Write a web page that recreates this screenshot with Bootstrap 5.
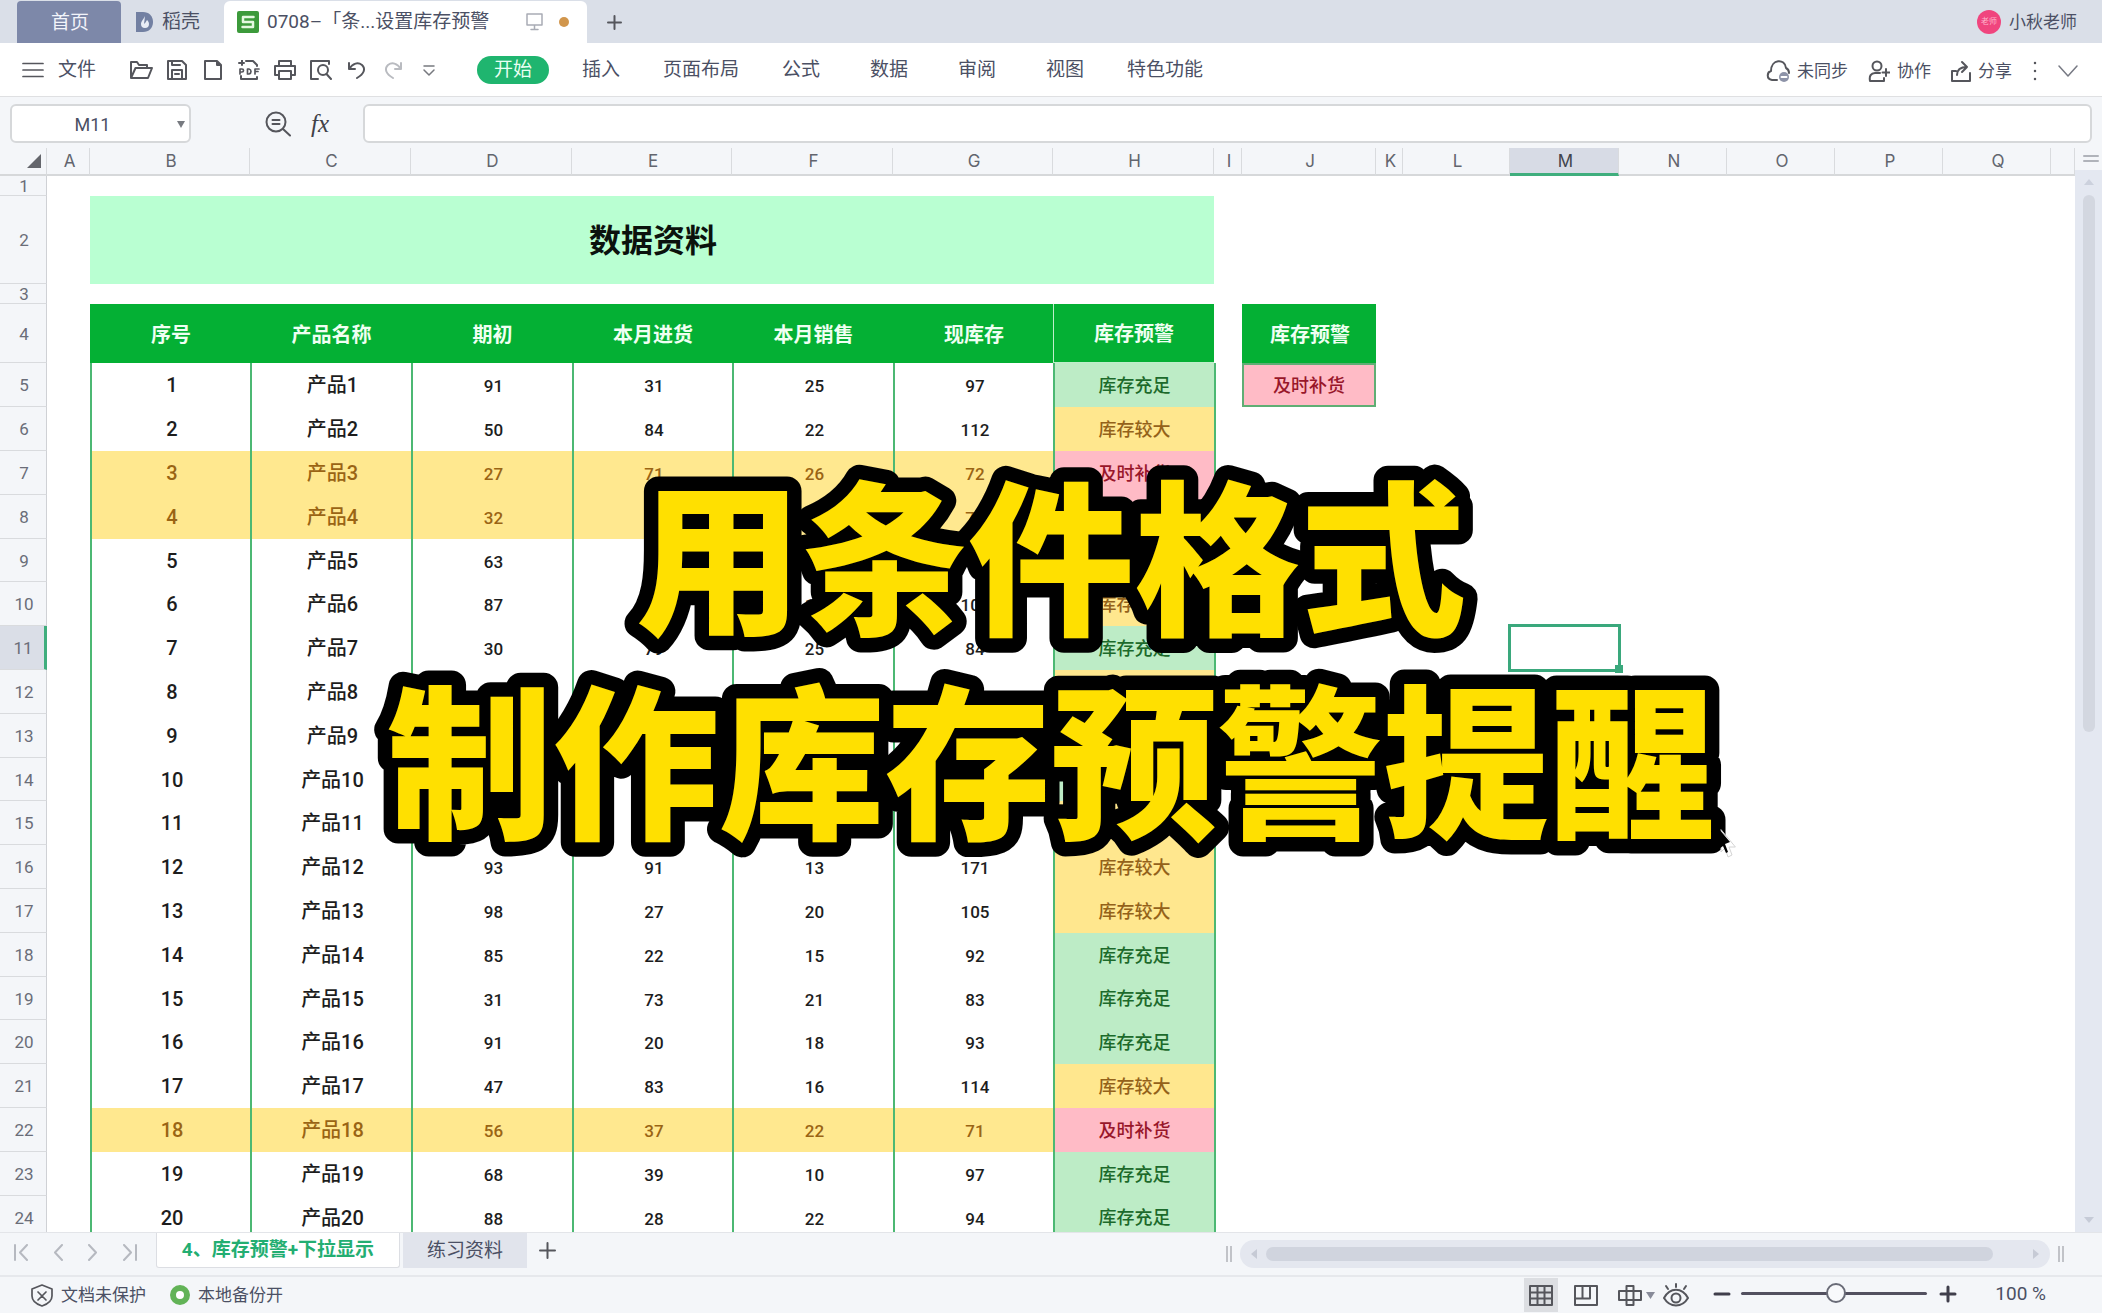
<!DOCTYPE html>
<html lang="zh-CN">
<head>
<meta charset="utf-8">
<meta name="viewport" content="width=device-width, initial-scale=1">
<title>设置库存预警</title>
<link href="https://cdn.jsdelivr.net/npm/bootstrap@5.3.0/dist/css/bootstrap.min.css" rel="stylesheet">
<style>
  body { font-family: Roboto, "Noto Sans CJK SC", sans-serif; font-size: 19px; line-height: 28px; color: #4b5064; background: #f4f6f9; }
  button { font: inherit; color: inherit; background: none; border: 0; padding: 0; display: flex; align-items: center; justify-content: center; }
  a { color: inherit; text-decoration: none; }
  svg { display: block; flex: none; fill: none; stroke: #55565c; stroke-width: 2; stroke-linejoin: round; stroke-linecap: round; }

  .tab-strip { height: 43px; background: #dadfe8; padding: 1px 25px 0 17px; }
  .tab-home { width: 104px; background: #7d88a9; color: #f2f4fa; border-radius: 4px 4px 0 0; padding: 2px 0 0 2px; }
  .tab-docer { width: 103px; padding-left: 15px; gap: 9px; }
  .tab-file { width: 363px; background: #fff; border-radius: 6px 6px 0 0; padding: 0 18px 0 13px; }
  .tab-file a { margin-left: 8px; }
  .dot-unsaved { width: 10px; height: 10px; border-radius: 50%; background: #d1964c; margin-left: 16px; }
  .small-ui { font-size: 17px; }
  .avatar { width: 24px; height: 24px; border-radius: 50%; background: #f0457e; color: #ffb3cb; font-size: 8px; line-height: 24px; text-align: center; }

  .menu-strip { height: 54px; background: #fff; border-bottom: 1px solid #dfe0e2; padding: 0 24px 0 22px; }
  .file-menu { gap: 14px; }
  .quick-tools { gap: 12px; margin-left: 33px; }
  .menu-list { gap: 24px; margin-left: 36px; }
  .menu-list a { min-width: 64px; padding: 0 6px; text-align: center; }
  .menu-list a.current { min-width: 72px; height: 28px; line-height: 28px; border-radius: 14px; margin-right: -4px; background: #1fb56f; color: #eafff3; }
  .share-tools { gap: 20px; font-size: 17px; padding-top: 2px; }
  .share-tools button { gap: 7px; }

  .formula-strip { height: 51px; padding: 7px 10px 5px; }
  .cell-box { background: #fff; border: 2px solid #d6d8da; border-radius: 6px; height: 39px; }
  .name-box { width: 181px; }
  .name-box input, .cell-box input { border: 0; outline: 0; background: none; width: 100%; color: #4b5064; }
  .name-box input { text-align: center; font-size: 18px; padding: 2px 4px 0 0; }
  .look-up { margin-left: 74px; }
  .fx { font: italic 25px/28px "Liberation Serif", serif; color: #404148; margin: 0 34px 0 20px; }

  .sheet { min-height: 0; background: #fff; }
  .sheet-view { min-width: 0; overflow: hidden; }
  .cells { table-layout: fixed; width: 100%; border-collapse: separate; border-spacing: 0; color: #1d1d1d; }
  .cells th, .cells td { padding: 0; text-align: center; vertical-align: middle; white-space: nowrap; overflow: hidden; }
  .cells thead th { height: 28px; font: 400 17px/24px Inter, sans-serif; color: #62656e; background: #f4f6f9; border-right: 1px solid #d9dbde; border-bottom: 2px solid #d6d8da; padding-left: 3px; }
  .cells thead th.picked { background: #d7dbe5; border-bottom: 3px solid #3fae7d; color: #41444c; }
  .cells tbody th { font-size: 17px; line-height: 18px; font-weight: 400; color: #6a6d78; background: #f4f6f9; border-right: 1px solid #cfd1d5; border-bottom: 1px solid #d9dbde; padding: 1px 0 0 2px; }
  .cells tbody th.picked { background: #dadee7; border-right: 3px solid #3fae7d; }
  .cells td.banner { background: #b9ffd2; font-size: 32px; line-height: 40px; font-weight: 700; color: #0b120d; padding: 2px 0 0 2px; }
  .cells td.head { background: #04b034; color: #effff2; font-size: 20px; font-weight: 700; padding: 2px 0 0 2px; }
  .cells td.head.alert-head { border-left: 1px solid #bfeecb; border-bottom: 1px solid #bfeecb; padding-left: 0; }
  .cells td.num { border-left: 2px solid #4cb873; font-size: 17px; font-weight: 500; line-height: 24px; padding: 2px 0 0 2px; }
  .cells td.lead-cell { font-size: 20px; padding-top: 0; }
  .cells td.edge { border-left: 2px solid #4cb873; }
  .cells .low td.num { background: #ffe88f; color: #9a6414; }
  .cells td.state { border-left: 2px solid #4cb873; font-size: 18px; font-weight: 500; line-height: 24px; padding-top: 1px; }
  .cells td.ok { background: #bdecc6; color: #1c6a2b; }
  .cells td.much { background: #ffe78e; color: #94621a; }
  .cells td.few { background: #ffbbc6; color: #98162a; }
  .cells td.boxed { border: 2px solid #5fae74; }
  .cells td.cursor-cell { position: relative; overflow: visible; outline: 3px solid #3aa87c; outline-offset: -1px; }
  .cursor-cell::after { content: ""; position: absolute; right: -4px; bottom: -3px; width: 8px; height: 8px; background: #3aa87c; }

  .v-scroll { width: 27px; background: #e4e8f1; }
  .v-scroll .corner { height: 22px; background: #f4f6f9; padding: 7px 8px; }
  .v-thumb { width: 12px; height: 537px; border-radius: 6px; background: #d3d7e0; margin-top: 1px; }
  .sheet-strip { height: 43px; border-top: 1px solid #e3e5e9; padding: 0 38px 0 14px; }
  .sheet-moves { gap: 23px; width: 142px; height: 38px; }
  .sheet-tab { height: 35px; padding: 0 24px; }
  .sheet-tab.current { width: 244px; padding: 0; background: #fff; color: #23ae72; font-weight: 700; border: 1px solid #dcdee3; border-top: 0; border-radius: 0 0 3px 3px; }
  .sheet-tab.other { background: #e1e4ec; margin-left: 3px; }
  .sheet-tab.adder { padding: 0; margin-left: 12px; }
  .h-track { width: 810px; height: 28px; border-radius: 14px; background: #e4e7ef; padding: 0 11px; }
  .h-thumb { height: 14px; border-radius: 7px; background: #d0d4de; margin: 0 40px 0 9px; }
  .grip { width: 6px; height: 16px; border: solid #c1c3c8; border-width: 0 2px; }

  .status-strip { height: 38px; border-top: 2px solid #e6e8ec; font-size: 17px; padding: 0 56px 0 31px; }
  .view-on { width: 34px; height: 34px; background: #dcdee2; }
  .zoom-range { width: 186px; height: 24px; appearance: none; background: none; margin: 0 12px 0 10px; }
  .zoom-range::-webkit-slider-runnable-track { height: 3px; border-radius: 2px; background: #52505f; }
  .zoom-range::-webkit-slider-thumb { appearance: none; width: 20px; height: 20px; margin-top: -9px; border-radius: 50%; border: 2px solid #696b77; background: #f8f9fb; }
  .zoom-set { padding-bottom: 3px; }
  .zoom-value { font-size: 19px; margin-left: 38px; }

  .caption { top: 438px; height: 440px; overflow: visible; pointer-events: none; }
  .caption text { font: 900 166px "Noto Sans CJK SC", sans-serif; fill: #ffe000; stroke: #000; stroke-width: 29px; stroke-linejoin: round; paint-order: stroke; text-anchor: middle; }
  .pointer { left: 1718px; top: 828px; }
</style>
<script src="https://cdn.jsdelivr.net/npm/bootstrap@5.3.0/dist/js/bootstrap.bundle.min.js"></script>
</head>
<body class="vh-100 overflow-hidden d-flex flex-column position-relative">

<header class="tab-strip d-flex align-items-stretch flex-shrink-0">
  <button class="tab-home">首页</button>
  <button class="tab-docer justify-content-start">
    <svg width="17" height="20" viewBox="0 0 17 20"><path d="M0 0h7c6 0 10 4 10 10s-4 10-10 10H0z" fill="#7280a2" stroke="none"/><path d="M9 4c-1 3-4 5-4 8a4 4 0 0 0 8 0c0-2-1-3-2-4-1 2-2 3-3 4" fill="#e8ecf5" stroke="none"/></svg>
    稻壳
  </button>
  <div class="tab-file d-flex align-items-center">
    <svg width="22" height="22" viewBox="0 0 22 22"><rect width="22" height="22" rx="2" fill="#3c9a3b" stroke="none"/><path d="M16.500 6H6v5h10v5H5.500" stroke="#e4f8e0" stroke-width="2.500"/></svg>
    <a href="#">0708–「条...设置库存预警</a>
    <svg class="ms-auto" width="17" height="18" viewBox="0 0 17 18" style="stroke:#a9acb5;stroke-width:1.500"><path d="M1 1h15v11H1zM8.500 12v4M5 16.500h7"/></svg>
    <span class="dot-unsaved"></span>
  </div>
  <button class="ms-3 ps-1" aria-label="新建"><svg width="15" height="15" viewBox="0 0 15 15"><path d="M7.500 1v13M1 7.500h13"/></svg></button>
  <div class="ms-auto d-flex align-items-center small-ui gap-2"><span class="avatar">老师</span><span>小秋老师</span></div>
</header>

<nav class="menu-strip d-flex align-items-center flex-shrink-0">
  <button class="file-menu"><svg width="22" height="16" viewBox="0 0 22 16" style="stroke-width:1.700"><path d="M1 1.500h20M1 8h20M1 14.500h20"/></svg>文件</button>
  <div class="quick-tools d-flex align-items-center">
    <button aria-label="打开"><svg width="24" height="20" viewBox="0 0 24 20"><path d="M2 18V2h6l2 3h8v3M2 18 6.500 8H23l-4 10z"/></svg></button>
    <button aria-label="保存"><svg width="24" height="20" viewBox="0 0 24 20"><path d="M3 1h14l4 4v14H3zM7 19v-9h10v9M7 1v4h8M10 14h4"/></svg></button>
    <button aria-label="新建文件"><svg width="24" height="20" viewBox="0 0 24 20"><path d="M4 1h12l4 4v14H4zM16 1v4h4"/></svg></button>
    <button aria-label="输出PDF"><svg width="24" height="20" viewBox="0 0 24 20"><path d="M9 1h7l4 4v1M4 16v3h16v-2M5 0v5M2 3h5"/><path d="M3 14V9h2q1.500 0 1.500 1.500T5 12H3M10.500 9v5h1.500q2-.5 2-2.500t-2-2.500zM18 14V9h4M18 11.500h3" stroke-width="1.700"/></svg></button>
    <button aria-label="打印"><svg width="24" height="20" viewBox="0 0 24 20"><path d="M6 6V1h12v5M6 15H2V6h20v9h-4M6 11h12v8H6z"/></svg></button>
    <button aria-label="打印预览"><svg width="24" height="20" viewBox="0 0 24 20"><path d="M9 19H2V1h18v3"/><circle cx="14" cy="10" r="5"/><path d="M17.500 14 22 19"/></svg></button>
    <button aria-label="撤销"><svg width="24" height="20" viewBox="0 0 24 20"><path d="M4 3v6h6M4 9c4-6 9-7 13-4 4 4 2 9-5 13"/></svg></button>
    <button aria-label="恢复"><svg width="24" height="20" viewBox="0 0 24 20" style="stroke:#b9bbc0"><path d="M20 3v6h-6M20 9c-4-6-9-7-13-4-4 4-2 9 5 13"/></svg></button>
    <button aria-label="更多"><svg width="24" height="20" viewBox="0 0 24 20" style="stroke:#77797f;stroke-width:1.500"><path d="M7 6h10M7 10l5 5 5-5"/></svg></button>
  </div>
  <div class="menu-list d-flex align-items-center">
    <a class="current" href="#">开始</a><a href="#">插入</a><a href="#">页面布局</a><a href="#">公式</a><a href="#">数据</a><a href="#">审阅</a><a href="#">视图</a><a href="#">特色功能</a>
  </div>
  <div class="share-tools ms-auto d-flex align-items-center">
    <button><svg width="24" height="24" viewBox="0 0 24 24"><path d="M11 21H6c-6-1-5-8-1-9 0-12 14-13 15-3 2 1 3 3 3 5"/><circle cx="18" cy="18" r="5" fill="#8d93a8" stroke="none"/><path d="M15.500 18h5" stroke="#fff"/></svg>未同步</button>
    <button><svg width="22" height="24" viewBox="0 0 22 24"><circle cx="9" cy="7" r="4.500"/><path d="M12 14H7c-4 0-6 3-5 8h14v-3M18 10v7M14.500 13.500h7"/></svg>协作</button>
    <button class="ms-n1"><svg width="20" height="24" viewBox="0 0 20 24"><path d="M5 12H1v10h18v-8M6 16c0-6 4-8 10-8M11 3l5 5-5 5"/></svg>分享</button>
    <button aria-label="更多选项"><svg width="6" height="20" viewBox="0 0 6 20" style="stroke-width:2.500"><path d="M3 2v.1M3 10v.1M3 18v.1"/></svg></button>
    <button aria-label="收起功能区"><svg width="20" height="12" viewBox="0 0 20 12" style="stroke:#777a84;stroke-width:1.500"><path d="M1 1l9 10 9-10"/></svg></button>
  </div>
</nav>

<div class="formula-strip d-flex align-items-center flex-shrink-0">
  <div class="cell-box name-box d-flex align-items-center">
    <input aria-label="名称框" value="M11">
    <svg class="me-1" width="8" height="8" viewBox="0 0 8 8"><path d="M0 1h8L4 8z" fill="#777a80" stroke="none"/></svg>
  </div>
  <button class="look-up" aria-label="查找"><svg width="26" height="26" viewBox="0 0 26 26"><circle cx="11" cy="11" r="9.500"/><path d="M18 18l7 6.500M7.500 9h7M7.500 13h7"/></svg></button>
  <button class="fx" aria-label="插入函数">fx</button>
  <div class="cell-box flex-grow-1"><input class="px-2" aria-label="编辑栏"></div>
</div>

<main class="sheet d-flex flex-grow-1">
  <div class="sheet-view flex-grow-1">
    <table class="cells">
      <colgroup id="cols"></colgroup>
      <thead><tr id="letters"></tr></thead>
      <tbody id="grid"></tbody>
    </table>
  </div>
  <div class="v-scroll d-flex flex-column align-items-center">
    <div class="corner w-100"><svg width="16" height="7" viewBox="0 0 16 7" style="stroke:#b0b3ba"><path d="M1 1h14M1 6h14"/></svg></div>
    <svg class="my-2" width="10" height="8" viewBox="0 0 10 8"><path d="M0 7h10L5 1z" fill="#ccd1dd" stroke="none"/></svg>
    <div class="v-thumb"></div>
    <svg class="mt-auto mb-2" width="10" height="8" viewBox="0 0 10 8"><path d="M0 1h10L5 7z" fill="#c6cbd7" stroke="none"/></svg>
  </div>
</main>

<div class="sheet-strip d-flex align-items-start flex-shrink-0">
  <div class="sheet-moves d-flex">
    <button aria-label="第一张"><svg width="15" height="17" viewBox="0 0 15 17" style="stroke:#b6b9c0"><path d="M1 1v15M13 1 6 8.500l7 7.500"/></svg></button>
    <button aria-label="上一张"><svg width="12" height="17" viewBox="0 0 12 17" style="stroke:#b6b9c0"><path d="M10 1 3 8.500l7 7.500"/></svg></button>
    <button aria-label="下一张"><svg width="12" height="17" viewBox="0 0 12 17" style="stroke:#b6b9c0"><path d="M2 1l7 7.500L2 16"/></svg></button>
    <button aria-label="最后一张"><svg width="15" height="17" viewBox="0 0 15 17" style="stroke:#b6b9c0"><path d="M14 1v15M2 1l7 7.500L2 16"/></svg></button>
  </div>
  <button class="sheet-tab current">4、库存预警+下拉显示</button>
  <button class="sheet-tab other">练习资料</button>
  <button class="sheet-tab adder" aria-label="新建工作表"><svg width="17" height="17" viewBox="0 0 17 17"><path d="M8.500 1v15M1 8.500h15"/></svg></button>
  <div class="ms-auto align-self-center d-flex align-items-center">
    <span class="grip me-2"></span>
    <div class="h-track d-flex align-items-center">
      <svg width="6" height="10" viewBox="0 0 6 10"><path d="M6 0v10L0 5z" fill="#c6cad5" stroke="none"/></svg>
      <div class="h-thumb flex-grow-1"></div>
      <svg width="6" height="10" viewBox="0 0 6 10"><path d="M0 0v10l6-5z" fill="#c6cad5" stroke="none"/></svg>
    </div>
    <span class="grip ms-2"></span>
  </div>
</div>

<footer class="status-strip d-flex align-items-center flex-shrink-0">
  <svg width="22" height="23" viewBox="0 0 22 23" style="stroke-width:1.700"><path d="M11 1l10 4v7c0 5-4 8-10 10C5 20 1 17 1 12V5zM7 8l8 8M15 8l-8 8"/></svg>
  <span class="ms-2">文档未保护</span>
  <svg class="ms-4" width="20" height="20" viewBox="0 0 20 20"><circle cx="10" cy="10" r="7" stroke="#62b357" stroke-width="6" fill="#fff"/></svg>
  <span class="ms-2">本地备份开</span>
  <div class="ms-auto d-flex align-items-center">
    <button class="view-on" aria-label="普通视图"><svg width="24" height="21" viewBox="0 0 24 21"><path d="M1 1h22v19H1zM1 7.500h22M1 13.500h22M8.500 1v19M15.500 1v19"/></svg></button>
    <button class="ms-3" aria-label="页面布局视图"><svg width="24" height="21" viewBox="0 0 24 21"><path d="M1 1h22v19H1zM1 13.500h15V1M8.500 1v12.500"/></svg></button>
    <button class="ms-3 ps-1" aria-label="分页预览"><svg width="24" height="21" viewBox="0 0 24 21"><path d="M8.500 1h7v19h-7zM1 6h22v9H1z"/></svg><svg class="ms-1" width="9" height="7" viewBox="0 0 9 7"><path d="M0 0h9L4.500 7z" fill="#888b99" stroke="none"/></svg></button>
    <button class="ms-2" aria-label="护眼模式"><svg width="26" height="24" viewBox="0 0 26 24"><path d="M1 15c6-11 18-11 24 0-6 10-18 10-24 0z"/><circle cx="13" cy="15" r="4.500"/><path d="M13 1v3M3 3l2 3M23 3l-2 3"/></svg></button>
    <div class="zoom-set d-flex align-items-center ms-4">
      <button aria-label="缩小"><svg width="18" height="18" viewBox="0 0 18 18" style="stroke:#3f3e4b;stroke-width:3"><path d="M2 9h14"/></svg></button>
      <input class="zoom-range" type="range" aria-label="显示比例" min="0" max="100" value="51">
      <button aria-label="放大"><svg width="18" height="18" viewBox="0 0 18 18" style="stroke:#3f3e4b;stroke-width:3"><path d="M2 9h14M9 2v14"/></svg></button>
      <span class="zoom-value">100 %</span>
    </div>
  </div>
</footer>

<svg class="caption position-absolute start-0 w-100"><text x="50%" y="184">用条件格式</text><text x="50%" y="388">制作库存预警提醒</text></svg>
<svg class="pointer position-absolute" width="18" height="34" viewBox="0 0 18 34"><path d="M3 2v22l4-4 3 9 4-2-3-8h6z" fill="#fff" stroke="#d4d4d4" stroke-width="1"/><path d="M1 1v20l4-3 3 7 2-1-3-8 5-2z" fill="#000" stroke="none"/></svg>

<script>
  const widths = [47, 43, 160, 161, 161, 160, 161, 160, 161, 28, 134, 27, 107, 109, 108, 108, 108, 108];
  cols.innerHTML = widths.map(w => `<col style="width:${w}px">`).join('') + '<col>';
  letters.innerHTML = '<th><svg class="ms-auto me-1" width="16" height="16" viewBox="0 0 16 16"><path d="M15 1v14H1z" fill="#64666c" stroke="none"/></svg></th>' +
    [...'ABCDEFGHIJKLMNOPQ'].map(c => `<th${c === 'M' ? ' class="picked"' : ''}>${c}</th>`).join('') + '<th></th>';

  const states = { few: '及时补货', much: '库存较大', ok: '库存充足' };
  // one row per product: opening, purchased, sold, in stock, state, label shown
  const stock = [
    [91, 31, 25, 97, 'ok'], [50, 84, 22, 112, 'much'], [27, 71, 26, 72, 'few'], [32, '', '', 72, 'few', ''], [63, '', '', '', 'much', ''],
    [87, 36, 18, 105, 'much'], [30, 79, 25, 84, 'ok'], ['', '', '', '', 'much', ''], ['', '', '', '', 'ok', ''], ['', '', '', '', 'ok', ''],
    ['', '', '', '', 'much', ''], [93, 91, 13, 171, 'much'], [98, 27, 20, 105, 'much'], [85, 22, 15, 92, 'ok'], [31, 73, 21, 83, 'ok'],
    [91, 20, 18, 93, 'ok'], [47, 83, 16, 114, 'much'], [56, 37, 22, 71, 'few'], [68, 39, 10, 97, 'ok'], [88, 28, 22, 94, 'ok']
  ];
  const blank = n => '<td></td>'.repeat(n);
  const row = (n, h, cells, cls = '') => `<tr class="${cls}" style="height:${h}px"><th${n === 11 ? ' class="picked"' : ''}>${n}</th>${cells}</tr>`;
  const heads = ['序号', '产品名称', '期初', '本月进货', '本月销售', '现库存'];

  let html = row(1, 19, blank(18));
  html += row(2, 88, '<td></td><td class="banner" colspan="7">数据资料</td>' + blank(10));
  html += row(3, 20, blank(18));
  html += row(4, 59, '<td></td>' + heads.map(t => `<td class="head">${t}</td>`).join('') +
    '<td class="head alert-head">库存预警</td><td></td><td class="head">库存预警</td>' + blank(8));
  stock.forEach((s, i) => {
    const [cls, text = states[cls]] = s.slice(4);
    const side = i === 0 ? '<td class="state few boxed">及时补货</td>' + blank(8)
      : i === 6 ? blank(3) + '<td class="cursor-cell"></td>' + blank(5) : blank(9);
    html += row(i + 5, i % 5 === 4 ? 43 : 44,
      `<td></td><td class="num lead-cell">${i + 1}</td><td class="num lead-cell">产品${i + 1}</td>` +
      s.slice(0, 4).map(v => `<td class="num">${v}</td>`).join('') +
      `<td class="state ${cls}">${text}</td><td class="edge"></td>` + side, cls === 'few' ? 'low' : '');
  });
  grid.innerHTML = html;
</script>
</body>
</html>
